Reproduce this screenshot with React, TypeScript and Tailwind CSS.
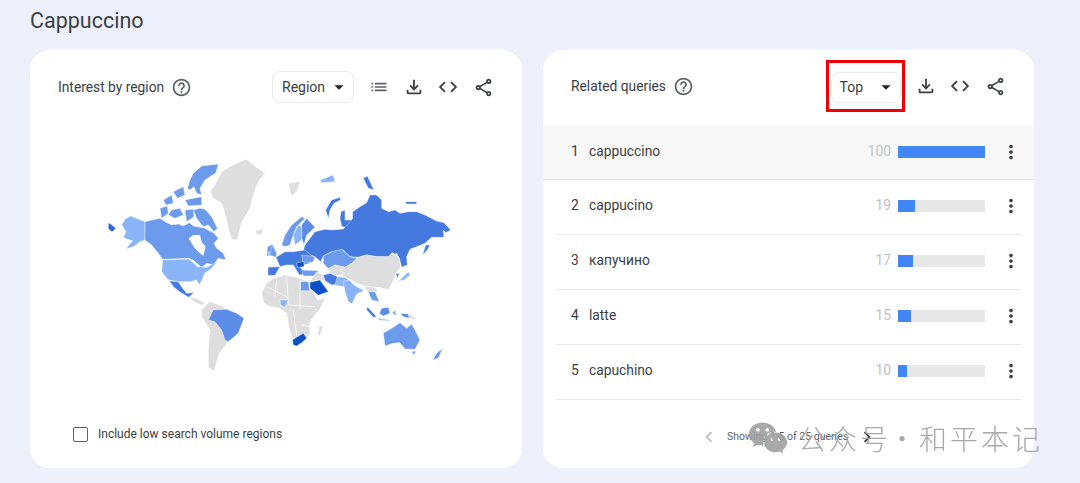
import React from "react";
import { MdOutlineFileDownload, MdCode, MdOutlineShare, MdList, MdHelpOutline, MdArrowDropDown, MdMoreVert, MdChevronLeft, MdChevronRight } from "react-icons/md";
import { FaWeixin } from "react-icons/fa";

const font = { fontFamily: '"Roboto", "Noto Sans CJK SC", sans-serif' };

const rows = [
  { n: 1, q: "cappuccino", v: 100, active: true },
  { n: 2, q: "cappucino", v: 19 },
  { n: 3, q: "капучино", v: 17 },
  { n: 4, q: "latte", v: 15 },
  { n: 5, q: "capuchino", v: 10 },
];

function HeaderIcons() {
  return (
    <div className="flex items-center text-[#3c4043]">
      <MdOutlineFileDownload size={22} />
      <MdCode size={22} className="ml-[12px]" />
      <MdOutlineShare size={21} className="ml-[14px]" />
    </div>
  );
}

function P({ c, d }: { c: string; d: string }) {
  return <polygon fill={c} points={d} />;
}

function WorldMap() {
  const g = "#dedede", l = "#8ab4f8", m = "#6c9bee", d = "#5a8ce8", r = "#4479df", x = "#0b50c8";
  return (
    <svg viewBox="100 150 360 230" className="w-[360px] h-[230px] blur-[0.4px]">
      <g transform="translate(90,150) scale(0.3333)" stroke="#ffffff" strokeWidth="1.2" strokeLinejoin="round">
        <P c={g} d="360,125 375,105 395,65 420,50 440,40 470,28 490,45 525,70 512,85 498,110 490,135 480,175 455,215 442,270 425,268 415,235 408,200 395,160 370,145" />
        <P c={g} d="497,242 520,238 515,252 500,254" />
        <P c={m} d="292,115 300,90 310,70 335,48 385,42 378,68 345,90 330,115 335,135 320,130 312,110 300,120" />
        <P c={m} d="330,175 345,178 365,200 382,235 372,245 355,225 340,230 320,205 310,180" />
        <P c={m} d="245,180 270,175 280,195 255,205 235,195" />
        <P c={m} d="210,175 232,168 235,190 215,205" />
        <P c={m} d="220,150 245,135 250,160 228,165" />
        <P c={m} d="250,125 280,110 285,135 262,145" />
        <P c={m} d="285,150 335,140 335,165 295,168" />
        <P c={m} d="285,180 310,178 312,200 290,215" />
        <P c={l} d="95,225 105,208 122,198 165,215 165,270 150,275 130,290 108,297 128,272 112,268 100,262 108,245" />
        <P c={m} d="165,215 185,210 210,205 225,215 245,225 265,222 280,228 298,218 310,228 345,235 372,250 385,265 372,280 380,295 400,310 408,330 385,325 370,345 350,340 335,352 320,340 310,330 295,325 218,328 205,310 185,285 165,270" />
        <polygon fill="#ffffff" stroke="none" points="296,265 310,255 330,255 335,275 347,290 340,318 325,305 312,292" />
        <P c={l} d="218,330 295,327 312,340 322,350 350,352 382,335 362,358 345,368 335,392 328,405 320,390 300,395 265,395 235,390 215,365" />
        <P c={r} d="238,392 265,396 278,415 290,430 312,428 296,442 270,426 250,410" />
        <P c={g} d="298,442 320,445 345,460 335,466 310,455" />
        <P c={g} d="335,480 358,455 392,466 410,480 395,540 415,575 388,610 372,662 355,652 355,600 360,540 335,500" />
        <P c={d} d="355,510 370,480 410,478 440,490 462,505 445,550 415,575 405,570 395,540 375,515" />
        <P c="#2f66d6" d="55,218 62,222 78,235 66,246 55,236" />
        <P c={m} d="533,290 548,282 556,315 530,318" />
        <P c={r} d="535,352 566,350 555,376 535,376" />
      </g>
      <g transform="translate(260,150) scale(0.3333)" stroke="#ffffff" strokeWidth="1.2" strokeLinejoin="round">
        <P c={g} d="5,430 20,400 40,385 75,375 120,385 145,395 160,425 172,450 195,445 178,480 160,500 148,520 150,550 130,575 110,580 95,560 85,520 80,490 60,475 30,470 12,460" />
        <g fill="none" stroke="#ffffff" strokeWidth="2">
          <path d="M50 385L45 440M20 410L80 440M80 380L85 465M120 390L120 480M85 465L165 470M100 480L110 560M60 470L85 440M125 525L150 530" />
        </g>
        <P c={g} d="178,530 190,525 180,558 172,555" />
        <P c={g} d="85,100 120,95 110,125 95,138" />
        <P c={g} d="0,75 12,68 5,85" />
        <P c={l} d="180,90 220,75 225,95 185,98" />
        <P c={r} d="310,85 322,78 342,120 325,115" />
        <P c={r} d="435,155 470,155 470,162 440,162" />
        <P c={r} d="240,142 215,150 197,180 205,205 210,180 222,160 242,150" />
        <P c={r} d="243,185 255,180 255,210 285,210 270,232 245,230 240,205" />
        <P c={r} d="130,300 135,285 150,265 165,245 195,238 215,240 250,237 262,225 278,205 278,185 300,170 320,158 330,135 350,135 365,150 365,175 385,185 405,180 420,190 445,185 470,185 495,195 530,213 552,218 572,240 558,248 550,240 552,262 530,262 515,262 495,280 470,290 450,298 440,320 442,345 425,352 418,325 410,310 385,320 350,320 320,315 295,322 270,320 250,300 215,305 190,318 182,335 165,320 140,312" />
        <P c={r} d="488,315 497,285 510,285 502,300" />
        <P c={m} d="65,285 75,255 95,225 125,200 135,205 110,230 100,255 90,285 75,290" />
        <P c={l} d="100,255 115,225 125,230 125,270 105,285" />
        <P c={d} d="125,225 140,205 165,232 140,255 132,285 125,265" />
        <P c={m} d="28,315 38,285 50,310 48,322" />
        <P c={l} d="22,308 30,305 28,318" />
        <P c={r} d="48,322 75,305 100,305 135,300 165,325 148,340 130,345 120,350 135,372 118,375 100,345 78,345 60,350" />
        <P c={m} d="125,315 165,320 160,335 130,340" />
        <P c={x} d="110,338 132,335 132,350 112,352" />
        <P c={r} d="24,352 60,350 45,376 24,376" />
        <P c={m} d="125,360 175,362 172,378 130,378" />
        <P c={m} d="190,318 215,305 245,298 270,320 292,325 275,340 255,352 225,345 205,356 190,340" />
        <P c={g} d="275,340 295,322 320,315 350,320 385,320 397,307 418,325 422,350 408,370 398,395 385,420 360,412 345,412 315,408 290,400 270,388 250,380 240,362 255,352" />
        <P c={g} d="205,356 225,345 255,352 240,362 255,372 228,378 210,370" />
        <P c={g} d="170,365 190,375 195,392 180,390 150,395" />
        <P c={r} d="190,375 210,370 232,380 240,402 215,405 195,392" />
        <P c={l} d="225,405 232,380 255,382 265,390 250,410" />
        <P c={x} d="150,397 180,390 205,425 175,436 150,415" />
        <P c={m} d="122,395 146,395 148,422 122,422" />
        <P c={l} d="60,450 85,450 75,472 62,465" />
        <P c={x} d="97,570 112,560 130,550 140,565 125,578 110,588 100,585" />
        <P c={l} d="250,395 268,390 282,405 312,422 290,432 276,462 265,455 255,425" />
        <P c={g} d="310,410 345,412 355,425 325,425" />
        <P c={m} d="325,425 345,425 358,455 335,450" />
        <P c={r} d="322,470 350,500 340,502 320,480" />
        <P c={l} d="355,505 390,510 390,513 355,510" />
        <P c={d} d="358,490 365,475 385,472 390,490 370,498" />
        <P c={l} d="395,490 405,480 410,498" />
        <P c={d} d="420,490 445,492 448,505 430,500" />
        <P c={g} d="448,492 470,510 448,505" />
        <P c={l} d="415,392 425,385 445,365 450,375 432,390 418,392" />
        <P c={r} d="408,370 418,372 412,385" />
        <P c={m} d="370,550 395,535 420,518 440,535 455,522 470,550 480,570 465,598 435,597 420,578 400,580 375,588" />
        <P c={m} d="455,605 468,603 462,615" />
        <P c={m} d="518,630 530,610 548,595 535,625" />
      </g>
    </svg>
  );
}

export default function App() {
  return (
    <div className="relative w-[1080px] h-[483px] overflow-hidden bg-[#eef1fb] pl-[30px] text-[#3c4043]" style={font}>
      <div className="h-[50px] pt-[7px] text-[21.5px] leading-[28px] text-[#3c4043]">Cappuccino</div>
      <div className="flex gap-[21px]">
        <section className="w-[492px] h-[418px] rounded-[20px] bg-white flex flex-col">
          <div className="flex items-center h-[22px] mt-[26px] pl-[28px] pr-[28px]">
            <span className="text-[13.8px]">Interest by region</span>
            <MdHelpOutline size={21} className="ml-[7px] text-[#5f6368]" />
            <div className="ml-auto flex items-center">
              <div className="flex items-center justify-between w-[82px] h-[32px] rounded-[8px] border border-[#e8eaed] pl-[9px] pr-[3px] text-[14px]">
                Region <MdArrowDropDown size={22} className="text-[#202124]" />
              </div>
              <MdList size={20} className="ml-[15px] mr-[14px] text-[#5f6368]" />
              <HeaderIcons />
            </div>
          </div>
          <div className="pl-[70px] pt-[52px]">
            <WorldMap />
          </div>
          <div className="flex items-center mt-[45px] pl-[43px] text-[12px]">
            <div className="w-[15px] h-[15px] border border-[#5f6368] rounded-[2px]" />
            <span className="ml-[10px]">Include low search volume regions</span>
          </div>
        </section>
        <section className="w-[491px] h-[418px] rounded-[20px] bg-white flex flex-col">
          <div className="flex items-center h-[75px] pl-[28px] pr-[28px] pb-[3px]">
            <span className="text-[13.8px]">Related queries</span>
            <MdHelpOutline size={21} className="ml-[7px] text-[#5f6368]" />
            <div className="ml-auto flex items-center gap-[10px]">
              <div className="flex items-center justify-center w-[79px] h-[52px] border-[3px] border-[#f00000]">
                <div className="flex items-center justify-between w-[70px] h-[31px] rounded-[8px] border border-[#e8eaed] pl-[8px] pr-[3px] text-[14px] mt-[2px]">
                  Top <MdArrowDropDown size={22} className="text-[#202124]" />
                </div>
              </div>
              <HeaderIcons />
            </div>
          </div>
          <div className="flex flex-col">
            {rows.map((r) => (
              <div key={r.n} className={r.active ? "bg-[#f8f8f8]" : ""}>
                <div className={`relative flex items-center h-[55px] border-b ${r.active ? "pl-[28px] pr-[13px] pb-[1px] border-[#e2e2e2]" : "ml-[13px] pl-[15px] mr-[13px] pb-[3px] border-[#e8e8e8]"} text-[13.8px]`}>
                  <span className="w-[18px]">{r.n}</span>
                  <span>{r.q}</span>
                  <span className="ml-auto w-[30px] text-right text-[#bdc1c6]">{r.v}</span>
                  <div className="ml-[7px] w-[87px] h-[12px] bg-[#e8e8e8]">
                    <div className="h-full bg-[#4285f4]" style={{ width: `${Math.max(r.v, 10)}%` }} />
                  </div>
                  <MdMoreVert size={22} className="ml-[15px] mr-[-1px] text-[#3c4043]" />
                </div>
              </div>
            ))}
          </div>
          <div className="flex items-center mt-[26px] pl-[155px] text-[10.5px] text-[#5f6368]">
            <MdChevronLeft size={22} className="text-[#bdc1c6]" />
            <span className="ml-[7px]">Showing 1-5 of 25 queries</span>
            <MdChevronRight size={22} className="ml-[8px] text-[#3c4043]" />
          </div>
        </section>
      </div>
      <div className="absolute left-[748px] top-[417px] flex items-center text-[#a0a0a0] opacity-90" style={{ fontFamily: '"Noto Sans CJK SC", sans-serif', fontWeight: 300 }}>
        <FaWeixin size={40} />
        <span className="ml-[10px] text-[28px] tracking-[3px]">公众号</span>
        <span className="ml-[-3px] text-[28px]">·</span>
        <span className="ml-[3px] text-[28px] tracking-[3px]">和平本记</span>
      </div>
    </div>
  );
}
